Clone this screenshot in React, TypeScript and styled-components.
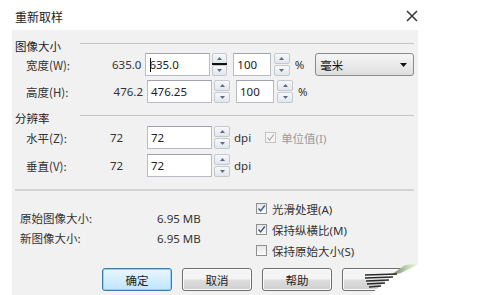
import React from "react";
import styled, { createGlobalStyle } from "styled-components";

const Global = createGlobalStyle`
  html, body {
    margin: 0;
    padding: 0;
    background: #ffffff;
  }
  body {
    font-family: "Noto Sans", "Noto Sans CJK SC", sans-serif;
    font-size: 11.5px;
    color: #333333;
  }
`;

const Dialog = styled.div`
  width: 488px;
  height: 295px;
  overflow: hidden;
  display: flex;
  flex-direction: column;
`;

const TitleBar = styled.div`
  width: 420px;
  height: 30px;
  display: flex;
  align-items: center;
  justify-content: space-between;
  padding: 0 1px 0 15px;
  box-sizing: border-box;
`;

const Title = styled.span`
  font-family: "Noto Sans CJK SC", sans-serif;
  font-size: 12px;
  color: #222;
  margin-top: 3px;
`;

const Close = styled.div`
  width: 14px;
  height: 14px;
  margin-top: 2px;
  display: flex;
  svg {
    display: block;
  }
`;

const Panel = styled.div`
  margin-left: 12px;
  width: 406px;
  flex: 1;
  background: #f1f1f1;
  padding: 0 4px 0 3px;
  box-sizing: border-box;
  display: flex;
  flex-direction: column;
`;

const Section = styled.div<{ $top: number; $gap: number }>`
  margin-top: ${p => p.$top}px;
  display: flex;
  flex-direction: column;
  gap: ${p => p.$gap}px;
`;

const Header = styled.div`
  display: flex;
  align-items: center;
  height: 15px;
  margin-bottom: -${4}px;
  span {
    width: 65px;
    font-family: "Noto Sans CJK SC", sans-serif;
    color: #222;
  }
  i {
    flex: 1;
    height: 1px;
    background: #c6c6c6;
    margin-bottom: 4px;
  }
`;

const Row = styled.div`
  display: flex;
  align-items: center;
  height: 23px;
  padding-left: 11px;
`;

const Label = styled.span`
  width: 75px;
  font-family: "Noto Sans CJK SC", sans-serif;
  color: #333;
`;

const Orig = styled.span`
  width: 42px;
  text-align: right;
  margin-right: 4px;
  color: #333;
`;

const Field = styled.div<{ $w: number }>`
  position: relative;
  width: ${p => p.$w}px;
  height: 23px;
  box-sizing: border-box;
  background: #fff;
  border: 1px solid #b8bcc4;
  border-top-color: #9ea3ab;
  display: flex;
  align-items: center;
  padding-left: 3px;
  color: #222;
`;

const Caret = styled.i`
  position: absolute;
  left: 4px;
  top: 4px;
  width: 1px;
  height: 14px;
  background: #111;
`;

const Spin = styled.div<{ $ml: number }>`
  position: relative;
  margin-left: ${p => p.$ml}px;
  width: 16px;
  height: 23px;
  display: flex;
  flex-direction: column;
  gap: 1px;
`;

const SpinHalf = styled.div`
  flex: 1;
  box-sizing: border-box;
  border: 1px solid #c4c8cf;
  border-radius: 2px;
  background: linear-gradient(#f7f8fa, #e2e6ec);
  display: flex;
  align-items: center;
  justify-content: center;
  svg {
    display: block;
  }
`;

const Mark = styled.i`
  position: absolute;
  left: 0;
  right: 0;
  top: 10px;
  height: 2px;
  background: #111;
`;

const Unit = styled.span<{ $ml: number; $muted?: boolean }>`
  margin-left: ${p => p.$ml}px;
  color: ${p => (p.$muted ? "#9a9a9a" : "#333")};
  font-family: "Noto Sans", "Noto Sans CJK SC", sans-serif;
`;

const Select = styled.div`
  margin-left: 11px;
  width: 100px;
  height: 23px;
  box-sizing: border-box;
  border: 1px solid #8a8a8a;
  border-radius: 3px;
  background: linear-gradient(#f6f6f6, #dedede);
  display: flex;
  align-items: center;
  justify-content: space-between;
  padding: 0 6px 0 4px;
  font-family: "Noto Sans CJK SC", sans-serif;
  color: #111;
`;

const Divider = styled.div`
  margin: 12px 0 0 0;
  height: 2px;
  background: #d4d4d4;
`;

const Bottom = styled.div`
  display: grid;
  grid-template-columns: 241px 1fr;
`;

const Info = styled.div`
  padding: 17px 0 0 5px;
  display: flex;
  flex-direction: column;
`;

const InfoRow = styled.div`
  height: 20px;
  display: flex;
  align-items: center;
  span:first-child {
    width: 137px;
    font-family: "Noto Sans CJK SC", sans-serif;
  }
`;

const Checks = styled.div`
  padding-top: 7px;
  display: flex;
  flex-direction: column;
`;

const Check = styled.label<{ $muted?: boolean }>`
  height: 21px;
  display: flex;
  align-items: center;
  gap: 5px;
  font-family: "Noto Sans", "Noto Sans CJK SC", sans-serif;
  color: ${p => (p.$muted ? "#9a9a9a" : "#333")};
`;

const Box = styled.span<{ $muted?: boolean }>`
  width: 11px;
  height: 11px;
  box-sizing: border-box;
  border: 1px solid ${p => (p.$muted ? "#c4c4c4" : "#8e8f8f")};
  background: ${p => (p.$muted ? "#f4f4f4" : "linear-gradient(#e6e6e6, #fbfbfb)")};
  display: flex;
  align-items: center;
  justify-content: center;
  svg {
    display: block;
  }
`;

const Buttons = styled.div`
  margin-top: 7px;
  padding-left: 87px;
  display: flex;
  gap: 10px;
`;

const Button = styled.div<{ $primary?: boolean }>`
  position: relative;
  width: 70px;
  height: 23px;
  box-sizing: border-box;
  border: 1px solid ${p => (p.$primary ? "#3d7bad" : "#707070")};
  border-radius: 3px;
  background: ${p =>
    p.$primary
      ? "linear-gradient(#eaf6fd, #bee6fd)"
      : "linear-gradient(#f4f4f4 45%, #dcdcdc 55%, #d0d0d0)"};
  box-shadow: inset 0 0 0 1px ${p => (p.$primary ? "#8fd0f5" : "#fbfbfb")};
  display: flex;
  align-items: center;
  justify-content: center;
  font-family: "Noto Sans CJK SC", sans-serif;
  color: #222;
`;

const Curl = styled.svg`
  position: absolute;
  left: -2px;
  top: -8px;
  overflow: visible;
`;

const Arrow = ({ up }: { up?: boolean }) => (
  <svg width="5" height="3" viewBox="0 0 5 3">
    <path d={up ? "M0 3 L2.5 0 L5 3 Z" : "M0 0 L2.5 3 L5 0 Z"} fill="#5d6b82" />
  </svg>
);

const NumField = ({ w, value, caret, mark, spinGap }: { w: number; value: string; caret?: boolean; mark?: boolean; spinGap: number }) => (
  <>
    <Field $w={w}>
      {caret && <Caret />}
      {value}
    </Field>
    <Spin $ml={spinGap}>
      <SpinHalf><Arrow up /></SpinHalf>
      <SpinHalf><Arrow /></SpinHalf>
      {mark && <Mark />}
    </Spin>
  </>
);

const Tick = () => (
  <svg width="9" height="9" viewBox="0 0 9 9">
    <path d="M1.5 4.5 L3.6 7 L7.8 1.5" fill="none" stroke="#3b5a8c" strokeWidth="1.4" />
  </svg>
);

const DisabledTick = () => (
  <svg width="9" height="9" viewBox="0 0 9 9">
    <path d="M1.5 4.5 L3.6 7 L7.8 1.5" fill="none" stroke="#a8a8a8" strokeWidth="1.1" />
  </svg>
);

export default function App() {
  return (
    <>
      <Global />
      <Dialog>
        <TitleBar>
          <Title>重新取样</Title>
          <Close>
            <svg width="14" height="14" viewBox="0 0 14 14">
              <path d="M2 2 L12 12 M12 2 L2 12" stroke="#3c3c3c" strokeWidth="1.6" />
            </svg>
          </Close>
        </TitleBar>
        <Panel>
          <Section $top={8} $gap={4}>
            <Header><span>图像大小</span><i /></Header>
            <Row>
              <Label>宽度(W):</Label>
              <Orig>635.0</Orig>
              <NumField w={65} value="635.0" caret mark spinGap={2} />
              <Field $w={38} style={{ marginLeft: 6 }}>100</Field>
              <Spin $ml={3}><SpinHalf><Arrow up /></SpinHalf><SpinHalf><Arrow /></SpinHalf></Spin>
              <Unit $ml={5}>%</Unit>
              <Select>
                <span>毫米</span>
                <svg width="7" height="4" viewBox="0 0 7 4"><path d="M0 0 L3.5 4 L7 0 Z" fill="#111" /></svg>
              </Select>
            </Row>
            <Row>
              <Label>高度(H):</Label>
              <Orig>476.2</Orig>
              <NumField w={65} value="476.25" spinGap={2} />
              <Field $w={38} style={{ marginLeft: 6 }}>100</Field>
              <Spin $ml={3}><SpinHalf><Arrow up /></SpinHalf><SpinHalf><Arrow /></SpinHalf></Spin>
              <Unit $ml={5}>%</Unit>
            </Row>
          </Section>
          <Section $top={7} $gap={5}>
            <Header><span>分辨率</span><i /></Header>
            <Row>
              <Label>水平(Z):</Label>
              <Orig style={{ textAlign: "left", paddingLeft: 9, boxSizing: "border-box" }}>72</Orig>
              <NumField w={65} value="72" spinGap={2} />
              <Unit $ml={4}>dpi</Unit>
              <Check $muted style={{ marginLeft: 14 }}>
                <Box $muted><DisabledTick /></Box>
                单位值(I)
              </Check>
            </Row>
            <Row>
              <Label>垂直(V):</Label>
              <Orig style={{ textAlign: "left", paddingLeft: 9, boxSizing: "border-box" }}>72</Orig>
              <NumField w={65} value="72" spinGap={2} />
              <Unit $ml={4}>dpi</Unit>
            </Row>
          </Section>
          <Divider />
          <Bottom>
            <Info>
              <InfoRow><span>原始图像大小:</span><span>6.95 MB</span></InfoRow>
              <InfoRow><span>新图像大小:</span><span>6.95 MB</span></InfoRow>
            </Info>
            <Checks>
              <Check><Box><Tick /></Box>光滑处理(A)</Check>
              <Check><Box><Tick /></Box>保持纵横比(M)</Check>
              <Check><Box />保持原始大小(S)</Check>
            </Checks>
          </Bottom>
          <Buttons>
            <Button $primary>确定</Button>
            <Button>取消</Button>
            <Button>帮助</Button>
            <Button>
              <Curl width="100" height="40" viewBox="0 0 100 40">
                <defs>
                  <linearGradient id="wedge" x1="0" y1="0" x2="1" y2="0">
                    <stop offset="0" stopColor="#6f7a66" />
                    <stop offset="0.5" stopColor="#b9d4a8" />
                    <stop offset="1" stopColor="#ffffff" />
                  </linearGradient>
                </defs>
                <path d="M22 40 L54 12 L64 4 L100 0 L100 40 Z" fill="#ffffff" />
                <path d="M50 14 L64 4 L80 2 L60 12 Z" fill="url(#wedge)" />
                <g stroke="#2a2a2a" strokeWidth="1.3">
                  <path d="M24 14 L56 13" />
                  <path d="M24 17 L52 16" />
                  <path d="M25 20 L48 19" />
                  <path d="M26 23 L44 22" />
                  <path d="M28 26 L40 25" />
                </g>
              </Curl>
            </Button>
          </Buttons>
        </Panel>
      </Dialog>
    </>
  );
}
